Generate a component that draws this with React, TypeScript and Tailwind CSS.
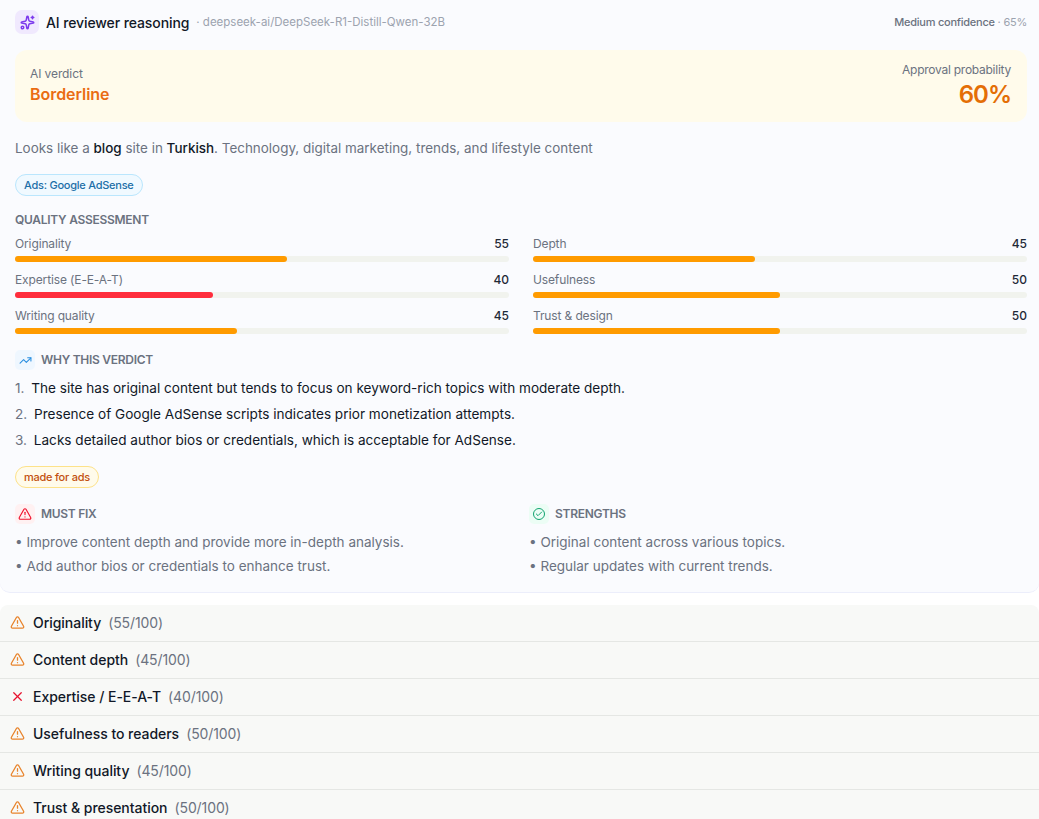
import { AlertTriangle, Check, Sparkles, TrendingUp, X } from "lucide-react";

const left = [
  { label: "Originality", v: 55, color: "bg-[#ff9b00]" },
  { label: "Expertise (E-E-A-T)", v: 40, color: "bg-[#ff2d3d]" },
  { label: "Writing quality", v: 45, color: "bg-[#ff9b00]" },
];
const right = [
  { label: "Depth", v: 45, color: "bg-[#ff9b00]" },
  { label: "Usefulness", v: 50, color: "bg-[#ff9b00]" },
  { label: "Trust & design", v: 50, color: "bg-[#ff9b00]" },
];
const rows = [
  { t: "Originality", s: "(55/100)" },
  { t: "Content depth", s: "(45/100)" },
  { t: "Expertise / E-E-A-T", s: "(40/100)", bad: true },
  { t: "Usefulness to readers", s: "(50/100)" },
  { t: "Writing quality", s: "(45/100)" },
  { t: "Trust & presentation", s: "(50/100)" },
];

function Bar({ label, v, color }: { label: string; v: number; color: string }) {
  return (
    <div className="h-[36px]">
      <div className="flex h-[20px] items-center justify-between text-[12px]">
        <span className="tracking-[-0.13px] text-[#6b7280]">{label}</span>
        <span className="font-medium tracking-[0px] text-[#1f2937]">{v}</span>
      </div>
      <div className="mt-[2px] h-[6px] rounded-full bg-[#f1f3ee]">
        <div className={`h-full rounded-full ${color}`} style={{ width: `${v}%` }} />
      </div>
    </div>
  );
}

function Heading({ bg, icon, children }: { bg: string; icon: React.ReactNode; children: React.ReactNode }) {
  return (
    <div className="flex h-[20px] items-center gap-[6px]">
      <span className={`flex h-[20px] w-[20px] items-center justify-center rounded-[5px] ${bg}`}>{icon}</span>
      <span className="text-[12px] font-semibold tracking-[-0.28px] text-[#6b7280]">{children}</span>
    </div>
  );
}

export default function App() {
  return (
    <div className="h-[819px] overflow-hidden bg-white font-['Inter','Liberation_Sans',sans-serif]">
      <div className="h-[593px] rounded-b-[10px] border-b border-[#eceefb] bg-[#fafbfe] pl-[15px] pr-[12px] pt-[10px]">
        <div className="flex h-[24px] items-center justify-between">
          <div className="flex items-center">
            <span className="flex h-[24px] w-[24px] items-center justify-center rounded-[7px] bg-[#f0e9fe]">
              <Sparkles size={15} strokeWidth={2.4} className="text-[#7c3aed]" />
            </span>
            <span className="ml-[7px] text-[14px] font-medium tracking-[-0.1px] text-[#111827]">AI reviewer reasoning</span>
            <span className="ml-[7px] pt-[1px] text-[11.5px] text-[#9ca3af]">· deepseek-ai/DeepSeek-R1-Distill-Qwen-32B</span>
          </div>
          <div className="text-[11px] tracking-[-0.24px] text-[#9ca3af]">
            <span className="font-medium text-[#6b7280]">Medium confidence</span> · 65%
          </div>
        </div>
        <div className="mt-[16px] flex h-[72px] justify-between rounded-[12px] bg-[#fffbeb] pl-[15px] pr-[16px]">
          <div className="pt-[15px]">
            <div className="text-[12px] leading-[18px] tracking-[-0.1px] text-[#6b7280]">AI verdict</div>
            <div className="-mt-[1px] text-[16px] font-semibold leading-[24px] tracking-[-0.05px] text-[#ea6c12]">Borderline</div>
          </div>
          <div className="pt-[11px] text-right">
            <div className="text-[12px] leading-[18px] tracking-[-0.25px] text-[#6b7280]">Approval probability</div>
            <div className="mt-[1px] text-[24px] font-semibold leading-[30px] tracking-[-1px] text-[#e46e05]">60%</div>
          </div>
        </div>
        <p className="mt-[16px] text-[13.45px] leading-[20px] text-[#6b7280]">
          Looks like a <span className="font-medium text-[#111827]">blog</span> site in{" "}
          <span className="font-medium text-[#111827]">Turkish</span>. Technology, digital marketing, trends, and lifestyle content
        </p>
        <div className="mt-[16px] flex">
          <span className="flex h-[22px] items-center rounded-full border border-[#bae6fd] bg-[#f0f9ff] px-[8px] text-[11px] font-medium tracking-[-0.25px] text-[#1d6fa8]">
            Ads: Google AdSense
          </span>
        </div>
        <div className="mt-[15px] flex h-[18px] items-center text-[12px] font-semibold tracking-[-0.28px] text-[#6b7280]">QUALITY ASSESSMENT</div>
        <div className="mt-[5px] grid grid-cols-2 gap-x-[24px]">
          <div>{left.map((b) => <Bar key={b.label} {...b} />)}</div>
          <div>{right.map((b) => <Bar key={b.label} {...b} />)}</div>
        </div>
        <div className="mt-[8px]">
          <Heading bg="bg-[#eff7ff]" icon={<TrendingUp size={13} className="text-[#2b8fe0]" />}>WHY THIS VERDICT</Heading>
        </div>
        <ol className="mt-[5px] text-[13.58px] leading-[26px] text-[#111827]">
          <li><span className="mr-[3px] text-[#6b7280]">1.</span> The site has original content but tends to focus on keyword-rich topics with moderate depth.</li>
          <li><span className="mr-[3px] text-[#6b7280]">2.</span> Presence of Google AdSense scripts indicates prior monetization attempts.</li>
          <li><span className="mr-[3px] text-[#6b7280]">3.</span> Lacks detailed author bios or credentials, which is acceptable for AdSense.</li>
        </ol>
        <div className="mt-[13px] flex">
          <span className="flex h-[22px] items-center rounded-full border border-[#fde28a] bg-[#fffbeb] px-[8px] text-[11px] font-medium tracking-[-0.25px] text-[#c2500f]">
            made for ads
          </span>
        </div>
        <div className="mt-[16px] grid grid-cols-2 gap-x-[16px]">
          <div>
            <Heading bg="bg-[#fff1f2]" icon={<AlertTriangle size={14} className="text-[#f0142f]" />}>MUST FIX</Heading>
            <ul className="mt-[6px] text-[13.5px] leading-[24px] text-[#6b7280]">
              <li>• Improve content depth and provide more in-depth analysis.</li>
              <li>• Add author bios or credentials to enhance trust.</li>
            </ul>
          </div>
          <div>
            <Heading
              bg="bg-[#ecfdf5]"
              icon={
                <span className="flex h-[12px] w-[12px] items-center justify-center rounded-full border border-[#10a36f]">
                  <Check size={8} strokeWidth={3} className="text-[#10a36f]" />
                </span>
              }
            >
              STRENGTHS
            </Heading>
            <ul className="mt-[6px] text-[13.5px] leading-[24px] text-[#6b7280]">
              <li>• Original content across various topics.</li>
              <li>• Regular updates with current trends.</li>
            </ul>
          </div>
        </div>
      </div>
      <div className="mt-[12px] overflow-hidden rounded-t-[8px]">
        {rows.map((r) => (
          <div key={r.t} className="flex h-[37px] items-center border-b border-[#e5e7e4] bg-[#f8f9f7] pb-[1px] pl-[10px]">
            <span className="flex w-[14px] justify-center">
              {r.bad ? (
                <X size={15} strokeWidth={2} className="shrink-0 text-[#e8112d]" />
              ) : (
                <AlertTriangle size={15} strokeWidth={2.1} className="shrink-0 text-[#e8842c]" />
              )}
            </span>
            <span className="ml-[9px] text-[14px] font-medium tracking-[-0.04px] text-[#111827]">{r.t}</span>
            <span className="ml-[7px] text-[14px] tracking-[-0.1px] text-[#6b7280]">{r.s}</span>
          </div>
        ))}
      </div>
    </div>
  );
}
